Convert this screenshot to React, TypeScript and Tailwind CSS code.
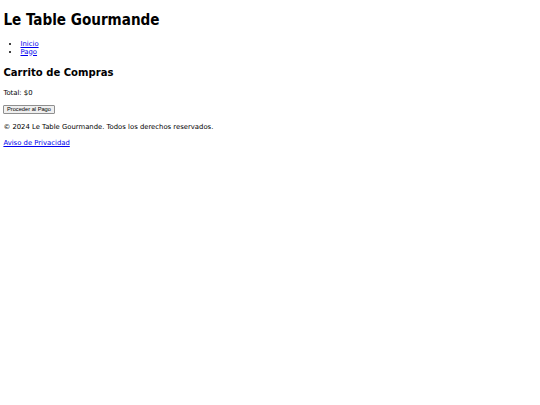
// Default-browser-looking page, scaled down: body text in DejaVu Sans,
// headings in the condensed bold cut, button in an Arial-like face.

const body = "font-['DejaVu_Sans',sans-serif]";
const heading = "font-['DejaVu_Sans_Condensed','DejaVu_Sans',sans-serif] font-bold leading-[1.164]";
const link = "text-[#0000ee] underline";

export default function App() {
  return (
    <div className={`${body} px-[3.4px] py-px text-[6.85px] leading-[1.164] text-black bg-white min-h-[405px]`}>
      <header>
        <h1 className={`${heading} text-[15.1px] mt-[11px] mb-[11.1px]`}>Le Table Gourmande</h1>
        <nav>
          <ul className="list-disc pl-[17.1px] my-[7.5px]">
            <li>
              <a href="#" className={link}>Inicio</a>
            </li>
            <li>
              <a href="#" className={link}>Pago</a>
            </li>
          </ul>
        </nav>
      </header>

      <main>
        <h2 className={`${heading} text-[11.2px] mt-[9px] mb-[11px]`}>Carrito de Compras</h2>
        <p className="mb-[7.3px]">Total: $0</p>
        <div className="flex">
          <button
            type="button"
            className="font-['Liberation_Sans',Arial,sans-serif] text-[5.7px] leading-none h-[9.5px] bg-[#efefef] border border-[#8f8f8f] rounded-[1px] px-[2.6px]"
          >
            Proceder al Pago
          </button>
        </div>
      </main>

      <footer>
        <p className="mt-[9.5px]">© 2024 Le Table Gourmande. Todos los derechos reservados.</p>
        <p className="mt-[8px]">
          <a href="#" className={link}>Aviso de Privacidad</a>
        </p>
      </footer>
    </div>
  );
}
